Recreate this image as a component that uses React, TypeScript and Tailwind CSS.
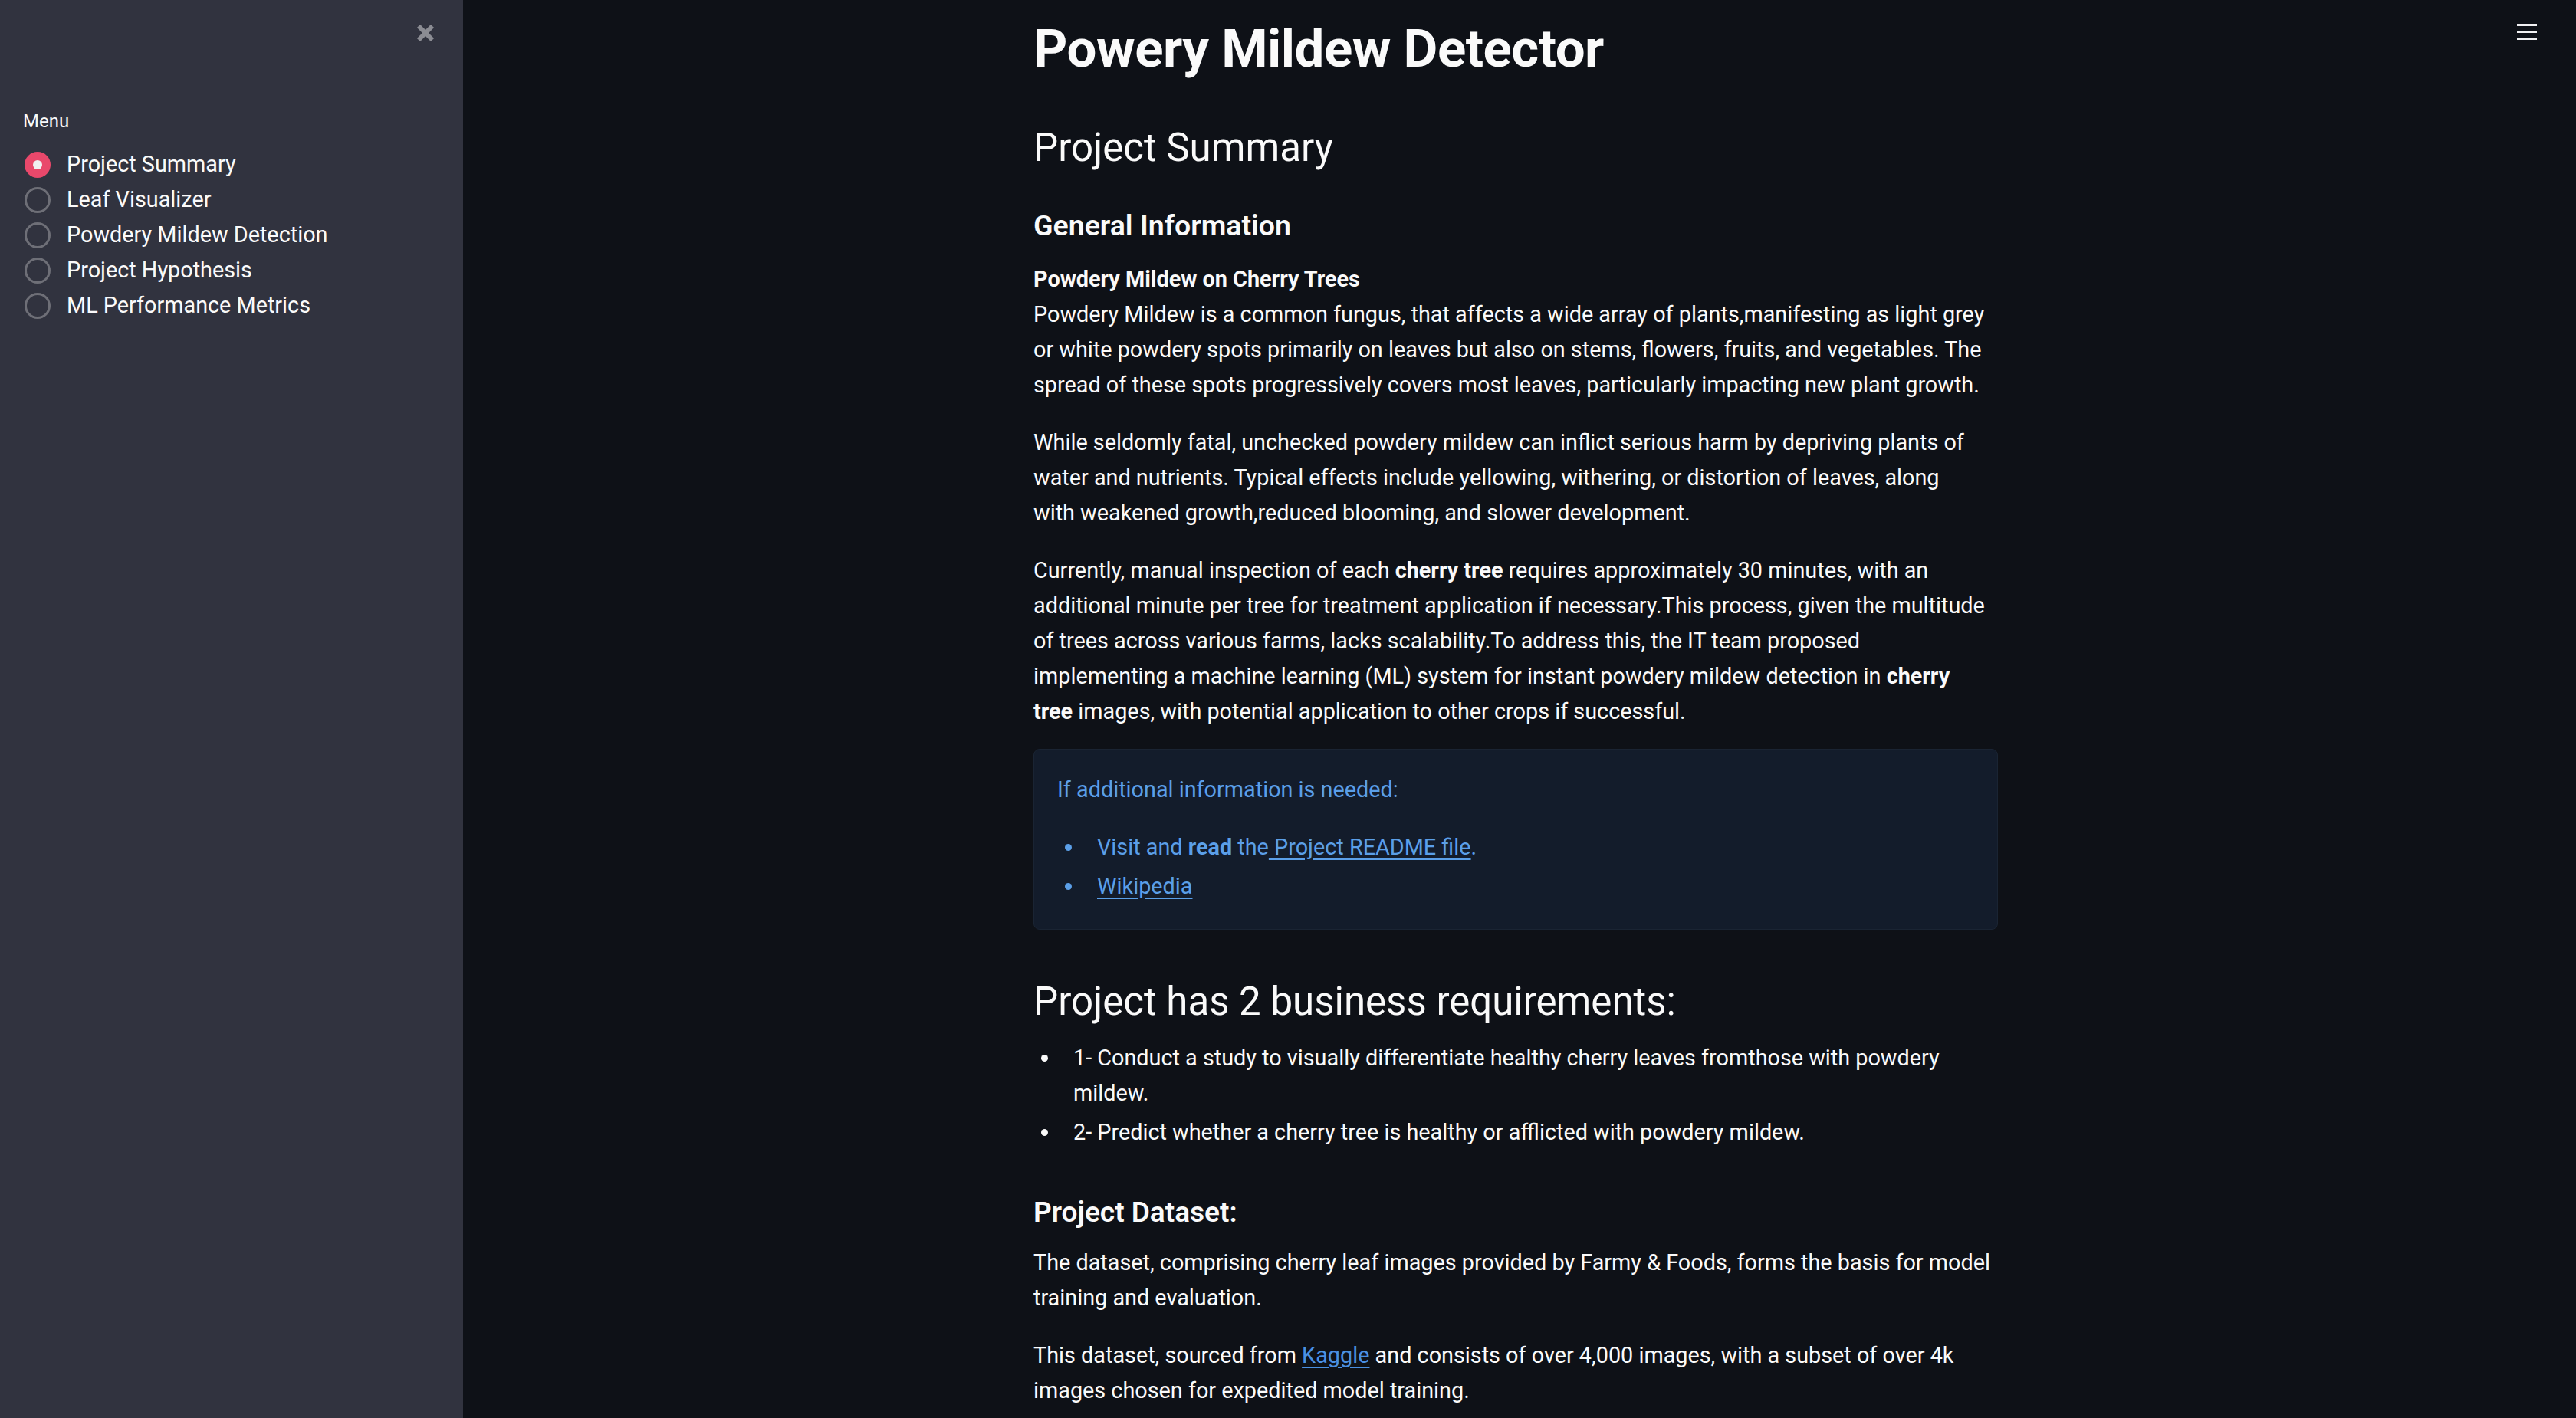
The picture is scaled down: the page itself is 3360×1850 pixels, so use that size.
import { useState } from "react";

const menuItems = [
  "Project Summary",
  "Leaf Visualizer",
  "Powdery Mildew Detection",
  "Project Hypothesis",
  "ML Performance Metrics",
];

function Sidebar() {
  const [selected, setSelected] = useState(0);
  return (
    <aside className="w-[604px] shrink-0 min-h-screen bg-[#31333f] relative">
      <button className="absolute left-[541px] top-[29px] w-[27px] h-[27px] flex items-center justify-center">
        <svg width="26" height="26" viewBox="0 0 26 26">
          <path d="M4 4 L22 22 M22 4 L4 22" stroke="#8b8c93" strokeWidth="6" strokeLinecap="butt" />
        </svg>
      </button>
      <div className="pt-[143px] pl-[30px]">
        <div className="text-[24px] leading-[30px] text-[#fafafa]">Menu</div>
        <div className="mt-[19px] flex flex-col">
          {menuItems.map((item, i) => (
            <label
              key={item}
              onClick={() => setSelected(i)}
              className="flex items-center h-[46px] cursor-pointer"
            >
              {selected === i ? (
                <span className="ml-[2px] w-[34px] h-[34px] rounded-full bg-[#e9486b] flex items-center justify-center">
                  <span className="w-[12px] h-[12px] rounded-full bg-[#f0f0f2]" />
                </span>
              ) : (
                <span className="ml-[2px] w-[34px] h-[34px] rounded-full border-[3px] border-[#6e6f77]" />
              )}
              <span className="ml-[21px] text-[28.8px] text-[#fafafa]">{item}</span>
            </label>
          ))}
        </div>
      </div>
    </aside>
  );
}

function Bullet({ children, color = "bg-[#fafafa]" }: { children: React.ReactNode; color?: string }) {
  return (
    <li className="relative pl-[52px] mb-[5px]">
      <span className={`absolute left-[10px] top-[19px] w-[9px] h-[9px] rounded-full ${color}`} />
      {children}
    </li>
  );
}

export default function App() {
  return (
    <div
      className="flex w-full min-h-screen bg-[#0e1117] text-[#fafafa] overflow-hidden"
      style={{ fontFamily: "Roboto, 'Liberation Sans', sans-serif" }}
    >
      <Sidebar />
      <main className="flex-1 relative h-[1850px] overflow-hidden pl-[744px]">
        <button className="absolute left-[2679px] top-[31px] w-[26px] flex flex-col gap-[6px]">
          <span className="block h-[3px] w-full bg-[#f0f0f2]" />
          <span className="block h-[3px] w-full bg-[#f0f0f2]" />
          <span className="block h-[3px] w-full bg-[#f0f0f2]" />
        </button>
        <div className="w-[1258px] text-[28.8px] leading-[46px] whitespace-nowrap">
          <h1 className="mt-[23px] text-[69px] leading-[82px] font-bold tracking-[-0.5px]">
            Powery Mildew Detector
          </h1>
          <h2 className="mt-[59px] text-[51px] leading-[58px] font-normal">Project Summary</h2>
          <h3 className="mt-[49px] text-[37.5px] leading-[46px] font-semibold">General Information</h3>
          <p className="mt-[24px]">
            <strong className="font-bold">Powdery Mildew on Cherry Trees</strong>
            <br />
            Powdery Mildew is a common fungus, that affects a wide array of plants,manifesting as light grey
            <br />
            or white powdery spots primarily on leaves but also on stems, flowers, fruits, and vegetables. The
            <br />
            spread of these spots progressively covers most leaves, particularly impacting new plant growth.
          </p>
          <p className="mt-[29px]">
            While seldomly fatal, unchecked powdery mildew can inflict serious harm by depriving plants of
            <br />
            water and nutrients. Typical effects include yellowing, withering, or distortion of leaves, along
            <br />
            with weakened growth,reduced blooming, and slower development.
          </p>
          <p className="mt-[29px]">
            Currently, manual inspection of each <strong className="font-bold">cherry tree</strong> requires
            approximately 30 minutes, with an
            <br />
            additional minute per tree for treatment application if necessary.This process, given the multitude
            <br />
            of trees across various farms, lacks scalability.To address this, the IT team proposed
            <br />
            implementing a machine learning (ML) system for instant powdery mildew detection in{" "}
            <strong className="font-bold">cherry</strong>
            <br />
            <strong className="font-bold">tree</strong> images, with potential application to other crops if
            successful.
          </p>

          <div className="mt-[26px] rounded-[8px] bg-[#131c2b] border border-[#1a2433] px-[30px] pt-[29px] pb-[28px] text-[#5b9fe8]">
            <p>If additional information is needed:</p>
            <ul className="mt-[29px]">
              <Bullet color="bg-[#5b9fe8]">
                Visit and <strong className="font-bold">read</strong> the
                <a href="#" className="underline underline-offset-[5px]"> Project README file</a>.
              </Bullet>
              <Bullet color="bg-[#5b9fe8]">
                <a href="#" className="underline underline-offset-[5px]">Wikipedia</a>
              </Bullet>
            </ul>
          </div>

          <h2 className="mt-[65px] text-[51px] leading-[58px] font-normal">
            Project has 2 business requirements:
          </h2>
          <ul className="mt-[21px]">
            <Bullet>
              1- Conduct a study to visually differentiate healthy cherry leaves fromthose with powdery
              <br />
              mildew.
            </Bullet>
            <Bullet>2- Predict whether a cherry tree is healthy or afflicted with powdery mildew.</Bullet>
          </ul>

          <h3 className="mt-[59px] text-[37px] leading-[46px] font-semibold">Project Dataset:</h3>
          <p className="mt-[19px]">
            The dataset, comprising cherry leaf images provided by Farmy &amp; Foods, forms the basis for
            model
            <br />
            training and evaluation.
          </p>
          <p className="mt-[29px]">
            This dataset, sourced from{" "}
            <a href="#" className="text-[#4a90e2] underline underline-offset-[5px]">Kaggle</a> and consists of
            over 4,000 images, with a subset of over 4k
            <br />
            images chosen for expedited model training.
          </p>
        </div>
      </main>
    </div>
  );
}
